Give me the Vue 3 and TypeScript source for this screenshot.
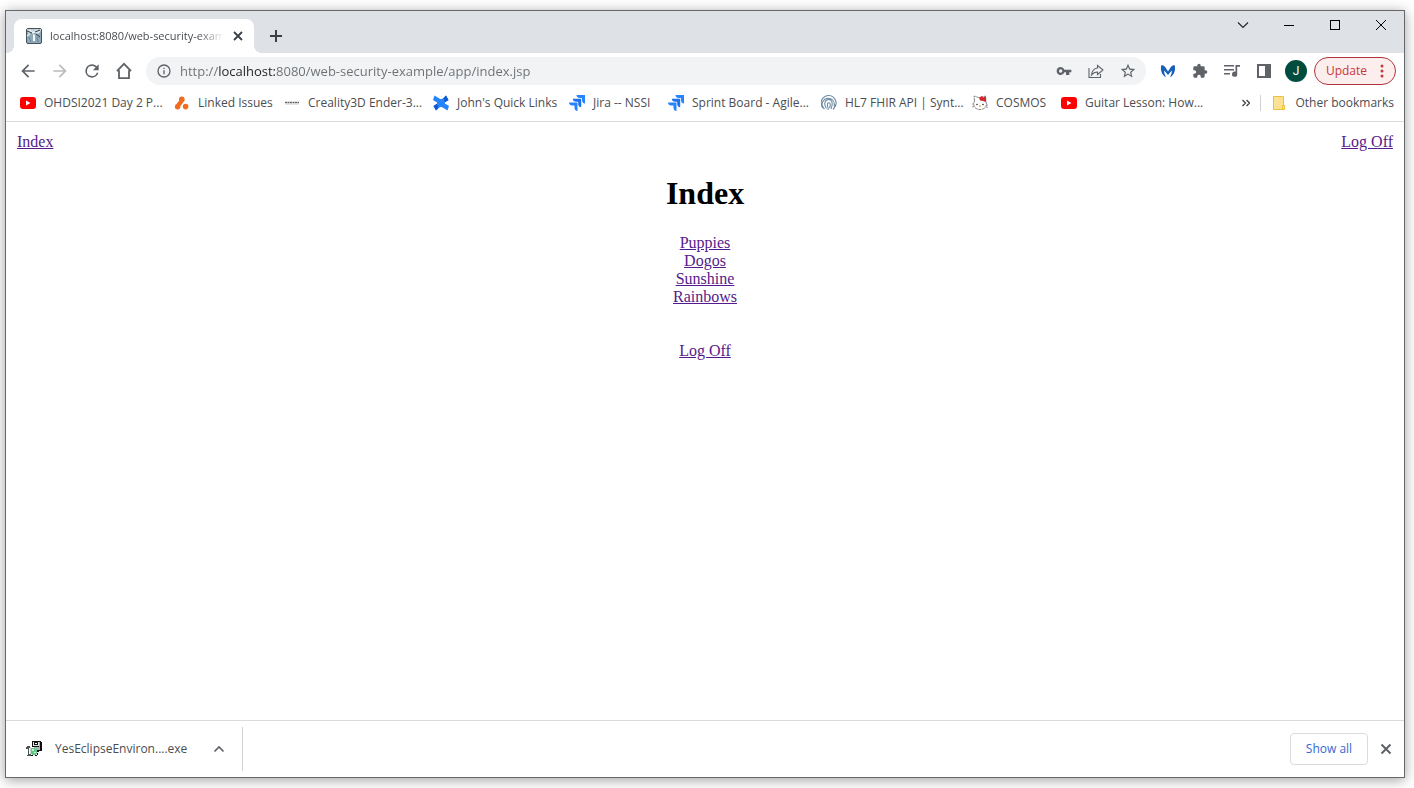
<script setup lang="ts">
import { ref } from 'vue'

type IconName =
  | 'youtube' | 'atlassian' | 'creality' | 'confluence' | 'jira' | 'fhir' | 'kitty'

interface Bookmark {
  icon: IconName
  label: string
  width: number
}

const address = ref('http://localhost:8080/web-security-example/app/index.jsp')

const bookmarks: Bookmark[] = [
  { icon: 'youtube', label: 'OHDSI2021 Day 2 P...', width: 154 },
  { icon: 'atlassian', label: 'Linked Issues', width: 110 },
  { icon: 'creality', label: 'Creality3D Ender-3...', width: 149 },
  { icon: 'confluence', label: "John's Quick Links", width: 136 },
  { icon: 'jira', label: 'Jira -- NSSI', width: 99 },
  { icon: 'jira', label: 'Sprint Board - Agile...', width: 153 },
  { icon: 'fhir', label: 'HL7 FHIR API | Synt...', width: 151 },
  { icon: 'kitty', label: 'COSMOS', width: 89 },
  { icon: 'youtube', label: 'Guitar Lesson: How...', width: 140 },
]

const pages: string[] = ['Puppies', 'Dogos', 'Sunshine', 'Rainbows']
</script>

<template>
  <div class="desktop">
    <div class="window">
      <header class="tabstrip">
        <div class="tab">
          <svg class="favicon" viewBox="0 0 16 16" aria-hidden="true">
            <rect x=".5" y=".5" width="15" height="15" rx="1.5" fill="#8fa9ba" stroke="#42525e" />
            <path d="M1 1h14v2L9 5 1 4z" fill="#c5d1d8" />
            <path d="M2 5l5-1 5 1 2-2M3 2l4 3 5-3M1 8l3-2" stroke="#eef2f4" stroke-width="1.2" fill="none" />
            <path d="M1 3l5 2M9 4l5-2M10 6l4 3" stroke="#2e3b45" fill="none" />
            <path d="M7 6l2 1v6H7z" fill="#f4f7f8" />
            <path d="M3 9l2 5M11 9l1 5" stroke="#6d8594" />
          </svg>
          <span class="tab-title">localhost:8080/web-security-exam</span>
          <button class="tab-close" type="button" aria-label="Close tab">
            <svg width="10" height="10" viewBox="0 0 10 10"><path d="M1 1l8 8M9 1L1 9" stroke="#3c4043" stroke-width="1.8" /></svg>
          </button>
        </div>
        <button class="new-tab" type="button" aria-label="New tab">
          <svg width="12" height="12" viewBox="0 0 12 12"><path d="M6 0v12M0 6h12" stroke="#3c4043" stroke-width="2" /></svg>
        </button>
        <div class="controls">
          <button type="button" aria-label="Search tabs">
            <svg width="12" height="12" viewBox="0 0 12 12"><path d="M1 3.5l5 5 5-5" fill="none" stroke="#222" stroke-width="1.1" /></svg>
          </button>
          <button type="button" aria-label="Minimize">
            <svg width="10" height="10" viewBox="0 0 10 10"><path d="M0 5.5h10" stroke="#000" /></svg>
          </button>
          <button type="button" aria-label="Maximize">
            <svg width="10" height="10" viewBox="0 0 10 10"><rect x=".5" y=".5" width="9" height="9" fill="none" stroke="#000" /></svg>
          </button>
          <button type="button" aria-label="Close window">
            <svg width="10" height="10" viewBox="0 0 10 10"><path d="M0 0l10 10M10 0L0 10" stroke="#000" /></svg>
          </button>
        </div>
      </header>

      <div class="toolbar">
        <button class="tool" type="button" aria-label="Back">
          <svg class="icon large" viewBox="0 0 24 24"><path d="M20 11H7.83l5.59-5.59L12 4l-8 8 8 8 1.41-1.41L7.83 13H20v-2z" /></svg>
        </button>
        <button class="tool faded" type="button" aria-label="Forward">
          <svg class="icon large" viewBox="0 0 24 24"><path d="M12 4l-1.41 1.41L16.17 11H4v2h12.17l-5.58 5.59L12 20l8-8z" /></svg>
        </button>
        <button class="tool" type="button" aria-label="Reload">
          <svg class="icon large" viewBox="0 0 24 24"><path d="M17.65 6.35A7.96 7.96 0 0 0 12 4a8 8 0 1 0 7.73 10h-2.08A6 6 0 1 1 12 6c1.66 0 3.14.69 4.22 1.78L13 11h7V4z" /></svg>
        </button>
        <button class="tool" type="button" aria-label="Home">
          <svg class="icon large" viewBox="0 0 24 24"><path d="M3.500 12.200L12 3.500l8.500 8.700M6 11v9.500h12V11" fill="none" stroke="#5f6368" stroke-width="2.200" /></svg>
        </button>

        <div class="omnibox">
          <button class="site" type="button" aria-label="Site information">
            <svg class="icon" viewBox="0 0 24 24"><path d="M11 17h2v-6h-2zm0-8h2V7h-2zm1-7a10 10 0 1 0 0 20 10 10 0 0 0 0-20zm0 18a8 8 0 1 1 0-16 8 8 0 0 1 0 16z" /></svg>
          </button>
          <input v-model="address" class="address" type="text" aria-label="Address" spellcheck="false" />
          <button class="tool" type="button" aria-label="Passwords">
            <svg class="icon" viewBox="0 0 24 24"><path d="M12.650 10A6 6 0 0 0 7 6a6 6 0 1 0 5.650 8H15v4h5v-4h3v-4zM7 14.500a2.500 2.500 0 1 1 0-5 2.500 2.500 0 0 1 0 5z" /></svg>
          </button>
          <button class="tool" type="button" aria-label="Share">
            <svg class="icon" viewBox="0 0 16 16"><path d="M1 5v9.500h11.500V11M9.500 2.500L15 7l-5.500 4.500V9C6.500 9 5 10 3.500 12 4 8 6 5.400 9.500 5z" fill="none" stroke="#5f6368" stroke-width="1.100" /></svg>
          </button>
          <button class="tool" type="button" aria-label="Bookmark this tab">
            <svg class="icon" viewBox="1 1 22 22"><path d="M22 9.240l-7.190-.620L12 2 9.190 8.630 2 9.240l5.460 4.730L5.820 21 12 17.270 18.180 21l-1.630-7.030zM12 15.400l-3.760 2.270 1-4.280-3.320-2.880 4.380-.380L12 6.100l1.710 4.040 4.380.380-3.320 2.880 1 4.280z" /></svg>
          </button>
        </div>

        <button class="tool" type="button" aria-label="Malwarebytes">
          <svg class="icon" viewBox="0 0 16 16">
            <path d="M8 8.500L5.500 4.500C4.500 3 3 2 1.500 2 .300 5 .800 10 4.500 13.500L6 14C4.500 11.500 4 9.500 4.300 7.500L8 12l3.700-4.500c.3 2-.2 4-1.700 6.500l1.500-.5C15.200 10 15.700 5 14.500 2c-1.500 0-3 1-4 2.500z" fill="#1760b8" />
          </svg>
        </button>
        <button class="tool" type="button" aria-label="Extensions">
          <svg class="icon" viewBox="0 0 24 24"><path d="M20.500 11H19V7a2 2 0 0 0-2-2h-4V3.500a2.500 2.500 0 0 0-5 0V5H4a2 2 0 0 0-2 2v3.800h1.500a2.700 2.700 0 0 1 0 5.400H2V20a2 2 0 0 0 2 2h3.800v-1.500a2.700 2.700 0 0 1 5.400 0V22H17a2 2 0 0 0 2-2v-4h1.500a2.500 2.500 0 0 0 0-5z" /></svg>
        </button>
        <button class="tool" type="button" aria-label="Media controls">
          <svg class="icon" viewBox="0 0 16 16"><path d="M0 2h10v1.600H0zM0 6h10v1.600H0zM0 10h6v1.600H0zM11.500 2H16v1.700h-2.800V11a2.600 2.600 0 1 1-1.700-2.200z" /></svg>
        </button>
        <button class="tool" type="button" aria-label="Side panel">
          <svg class="icon" viewBox="0 0 16 16"><path d="M1 1h14v14H1zM3 3v10h6V3z" fill-rule="evenodd" /></svg>
        </button>
        <button class="tool" type="button" aria-label="Profile"><span class="avatar">J</span></button>
        <button class="update" type="button">
          <span>Update</span>
          <svg width="4" height="14" viewBox="0 0 4 14"><circle cx="2" cy="2" r="1.500" /><circle cx="2" cy="7" r="1.500" /><circle cx="2" cy="12" r="1.500" /></svg>
        </button>
      </div>

      <nav class="bookmarks" aria-label="Bookmarks">
        <a v-for="b in bookmarks" :key="b.label" class="bookmark" href="#" :style="{ width: b.width + 'px' }">
          <svg class="mark" viewBox="0 0 16 16" aria-hidden="true">
            <template v-if="b.icon === 'youtube'">
              <rect y="2" width="16" height="12" rx="3" fill="#f00" />
              <path d="M6 5.500v5L10.500 8z" fill="#fff" />
            </template>
            <template v-else-if="b.icon === 'atlassian'">
              <path d="M7.500 4.200C8.500 7 4.500 8.500 3.800 11.500" fill="none" stroke="#f26b21" stroke-width="4.400" stroke-linecap="round" />
              <circle cx="7.800" cy="4.400" r="2.800" fill="#f26b21" />
              <circle cx="3.600" cy="11.800" r="2.700" fill="#f26b21" />
              <circle cx="11.600" cy="11.600" r="2.800" fill="#f26b21" />
            </template>
            <template v-else-if="b.icon === 'creality'">
              <path d="M1 7.500h14" stroke="#666" stroke-width="1.500" stroke-dasharray="2 .500" />
              <path d="M1 9h14" stroke="#ccc" />
            </template>
            <template v-else-if="b.icon === 'confluence'">
              <path d="M1.500.500l4 2.500c2 1.500 3 1.500 5 0L13 .500 15.500 5C11 9 5 9 0 5z" fill="#2684ff" />
              <path d="M10.500 3L13 .500 15.500 5l-3.500 2.200z" fill="#1259cf" />
              <path d="M14.500 15.500l-4-2.500c-2-1.500-3-1.500-5 0L3 15.500.500 11C5 7 11 7 16 11z" fill="#2684ff" />
              <path d="M5.500 13L3 15.500.500 11 4 8.800z" fill="#1259cf" />
              <path d="M4 6h8v4H4z" fill="#2684ff" />
            </template>
            <template v-else-if="b.icon === 'jira'">
              <path d="M7.500 0H16v8.500c-2 0-3-1.400-3-3.200V3h-2.200C9 3 7.500 2 7.500 0z" fill="#2684ff" />
              <path d="M3.800 3.800h8.400v8.400c-2 0-3-1.400-3-3.200V6.800H7c-1.800 0-3.200-1-3.200-3z" fill="#1d72ee" />
              <path d="M0 7.500h8.500V16c-2 0-3-1.400-3-3.200v-2.300H3.200C1.400 10.500 0 9.500 0 7.500z" fill="#2684ff" />
            </template>
            <template v-else-if="b.icon === 'fhir'">
              <g fill="none" stroke="#6e8ca4" stroke-width="1.100">
                <path d="M2 13a7.500 7.500 0 1 1 12-1M3.500 14A6 6 0 1 1 13 11M5.500 13.500C1 7 6.500 3 9.500 5c2.500 1.500 2 5 .500 9M7 15c1-3-2-5 0-7 2-1 3 1 1.500 5M12 14.500c1-1 2-3 1.800-5M.500 9.500l2 3" />
              </g>
            </template>
            <template v-else>
              <path d="M2.500 6L2 1l4.500 1.500h3L13.500 1l.5 6c2 4.500-2 7.500-6 7.500S0 11.500 2.500 6z" fill="#fff" stroke="#777" stroke-width=".9" stroke-dasharray="3 .700" />
              <path d="M7 2.500L10 1l1.500 1.500 2.500-1V7l-3-1-3-.500z" fill="#d3262b" />
              <circle cx="5" cy="9.500" r=".8" fill="#333" />
              <circle cx="11" cy="9.500" r=".8" fill="#333" />
              <ellipse cx="8" cy="11" rx="1" ry=".7" fill="#d9a520" />
              <path d="M0 9h2M0 12l2-.500M14 10h2M14 12l2 .500" stroke="#777" stroke-width=".7" />
            </template>
          </svg>
          <span>{{ b.label }}</span>
        </a>
        <button class="more" type="button" aria-label="More bookmarks">
          <svg width="8" height="8" viewBox="0 0 8 8"><path d="M.500 1l3 3-3 3M4.500 1l3 3-3 3" fill="none" stroke="#3c4043" stroke-width="1.300" /></svg>
        </button>
        <a class="other" href="#">
          <svg width="12" height="14" viewBox="0 0 12 14" aria-hidden="true">
            <path d="M.500.500h10v9h1v4H.500z" fill="#fde293" stroke="#e8c23c" />
            <path d="M9.500 13.500v-4h2" fill="none" stroke="#e8c23c" />
          </svg>
          <span>Other bookmarks</span>
        </a>
      </nav>

      <main class="page">
        <div class="page-links">
          <a href="#">Index</a>
          <a href="#">Log Off</a>
        </div>
        <h1>Index</h1>
        <ul>
          <li v-for="p in pages" :key="p"><a href="#">{{ p }}</a></li>
        </ul>
        <p><a href="#">Log Off</a></p>
      </main>

      <footer class="downloads">
        <button class="download" type="button">
          <svg width="16" height="16" viewBox="0 0 16 16" aria-hidden="true" shape-rendering="crispEdges">
            <path d="M6 0h9v6H6z" fill="#111" />
            <path d="M7 1h6v4H7z" fill="#dfe5e5" />
            <path d="M8 1h4v3H8z" fill="#111" />
            <path d="M9 2h2v1H9z" fill="#fff" />
            <path d="M8 6h6v3H8zM13 1h1v5h-1z" fill="#aab2b2" />
            <path d="M14 1h2v9h-3v1h-2V9h3z" fill="#111" />
            <path d="M1 5h3v2H3v6h2v2H1v-1h1V8H0V6h1z" fill="#4c5555" />
            <path d="M4 6h1v7H4z" fill="#c9d6d0" />
            <path d="M5 7h4v1h2v5h-1v1H6v-1H5z" fill="#66c389" />
            <path d="M6 8h2v2H6zM8 11h2v1H8z" fill="#c9efd3" />
            <path d="M5 14h2v1H5zM9 14h2v1H9zM11 12h1v2h-1z" fill="#111" />
          </svg>
          <span>YesEclipseEnviron....exe</span>
        </button>
        <button class="download-menu" type="button" aria-label="Download options">
          <svg width="12" height="8" viewBox="0 0 12 8"><path d="M1.500 6.500L6 2l4.500 4.500" fill="none" stroke="#5f6368" stroke-width="1.700" /></svg>
        </button>
        <button class="show-all" type="button">Show all</button>
        <button class="dismiss" type="button" aria-label="Close downloads bar">
          <svg width="12" height="12" viewBox="0 0 12 12"><path d="M1.500 1.500l9 9M10.500 1.500l-9 9" stroke="#5f6368" stroke-width="2" /></svg>
        </button>
      </footer>
    </div>
  </div>
</template>

<style>
body {
  margin: 0;
  background: #fff;
}
</style>

<style scoped>
* {
  box-sizing: border-box;
}

.desktop {
  display: flex;
  min-height: 100vh;
  padding: 10px 9px 10px 5px;
  overflow: hidden;
}

.window {
  display: flex;
  flex: 1;
  flex-direction: column;
  min-width: 0;
  border: 1px solid #66686b;
  background: #fff;
  box-shadow: 0 2px 12px rgba(0, 0, 0, 0.38);
  color: #4a4d51;
  font: 12px/16px "Open Sans", "Noto Sans", sans-serif;
}

button {
  display: flex;
  align-items: center;
  justify-content: center;
  flex-shrink: 0;
  margin: 0;
  padding: 0;
  border: 0;
  background: none;
  color: inherit;
  font: inherit;
}

svg {
  display: block;
  flex-shrink: 0;
}

.tabstrip {
  display: flex;
  height: 42px;
  padding-left: 8px;
  background: #dee1e6;
}

.tab {
  position: relative;
  display: flex;
  align-items: center;
  width: 240px;
  height: 34px;
  margin-top: 8px;
  padding: 0 8px 0 12px;
  border-radius: 8px 8px 0 0;
  background: #fff;
}

.tab::before,
.tab::after {
  content: "";
  position: absolute;
  bottom: 0;
  width: 8px;
  height: 8px;
}

.tab::before {
  right: 100%;
  background: radial-gradient(circle at 0 0, transparent 8px, #fff 8px);
}

.tab::after {
  left: 100%;
  background: radial-gradient(circle at 100% 0, transparent 8px, #fff 8px);
}

.favicon {
  width: 16px;
  height: 16px;
}

.tab-title {
  flex: 1;
  margin-left: 8px;
  overflow: hidden;
  font-size: 11px;
  white-space: nowrap;
  mask-image: linear-gradient(to right, #000 85%, transparent);
}

.tab-close {
  width: 16px;
  height: 16px;
  margin-left: 6px;
}

.new-tab {
  width: 28px;
  height: 28px;
  margin: 11px 0 0 8px;
}

.controls {
  display: flex;
  margin-left: auto;
}

.controls button {
  width: 46px;
  height: 28px;
}

.toolbar {
  display: flex;
  align-items: center;
  height: 36px;
  padding: 0 8px 0 6px;
}

.tool {
  width: 32px;
  height: 28px;
}

.icon {
  width: 16px;
  height: 16px;
  fill: #5f6368;
}

.icon.large {
  width: 20px;
  height: 20px;
}

.faded .icon {
  fill: #babcbe;
}

.omnibox {
  display: flex;
  flex: 1;
  align-items: center;
  min-width: 0;
  height: 28px;
  margin: 0 6px;
  padding: 0 2px 0 10px;
  border-radius: 14px;
  background: #f1f3f4;
}

.site {
  width: 16px;
  height: 16px;
}

.address {
  flex: 1;
  min-width: 0;
  height: 20px;
  margin-left: 8px;
  padding: 0;
  border: 0;
  outline: 0;
  background: linear-gradient(to right, #6b6f73 39px, #202124 39px, #202124 95px, #6b6f73 95px);
  background-clip: text;
  color: transparent;
  font: 13px/20px "Open Sans", "Noto Sans", sans-serif;
}

.avatar {
  width: 22px;
  height: 22px;
  border-radius: 50%;
  background: #004d40;
  color: #fff;
  font-family: Roboto, sans-serif;
  line-height: 22px;
}

.update {
  gap: 13px;
  width: 82px;
  height: 28px;
  margin-left: 2px;
  border: 1px solid #b3333a;
  border-radius: 14px;
  background: #fceeed;
  color: #c5373c;
}

.update svg {
  fill: #c5373c;
}

.bookmarks {
  display: flex;
  align-items: center;
  height: 33px;
  padding: 0 10px 4px 14px;
  border-bottom: 1px solid #d9dbdd;
}

.bookmark,
.other {
  display: flex;
  flex-shrink: 0;
  align-items: center;
  gap: 8px;
  color: inherit;
  text-decoration: none;
  white-space: nowrap;
}

.mark {
  width: 16px;
  height: 16px;
}

.more {
  width: 16px;
  height: 16px;
  margin-left: auto;
}

.other {
  gap: 10px;
  margin-left: 6px;
  padding-left: 12px;
  border-left: 1px solid #cfd1d4;
}

.page {
  flex: 1;
  padding: 11px;
  color: #000;
  font: 16px/18px "Liberation Serif", serif;
  text-align: center;
}

.page a {
  color: #551a8b;
  text-decoration: underline;
}

.page-links {
  display: flex;
  justify-content: space-between;
}

.page h1 {
  margin: 24px 0 22px;
  font-size: 32px;
  line-height: 37px;
}

.page ul {
  margin: 0;
  padding: 0;
  list-style: none;
}

.page p {
  margin: 36px 0 0;
}

.downloads {
  display: flex;
  align-items: center;
  height: 57px;
  padding: 0 10px 0 20px;
  border-top: 1px solid #d9dbdd;
}

.download {
  gap: 13px;
}

.download-menu {
  justify-content: flex-end;
  width: 56px;
  height: 44px;
  padding-right: 17px;
  border-right: 1px solid #cfd1d4;
}

.show-all {
  width: 78px;
  height: 32px;
  margin-left: auto;
  border: 1px solid #d9dbdd;
  border-radius: 4px;
  color: #3367d6;
  font-weight: 500;
}

.dismiss {
  width: 16px;
  height: 16px;
  margin-left: 10px;
}
</style>
